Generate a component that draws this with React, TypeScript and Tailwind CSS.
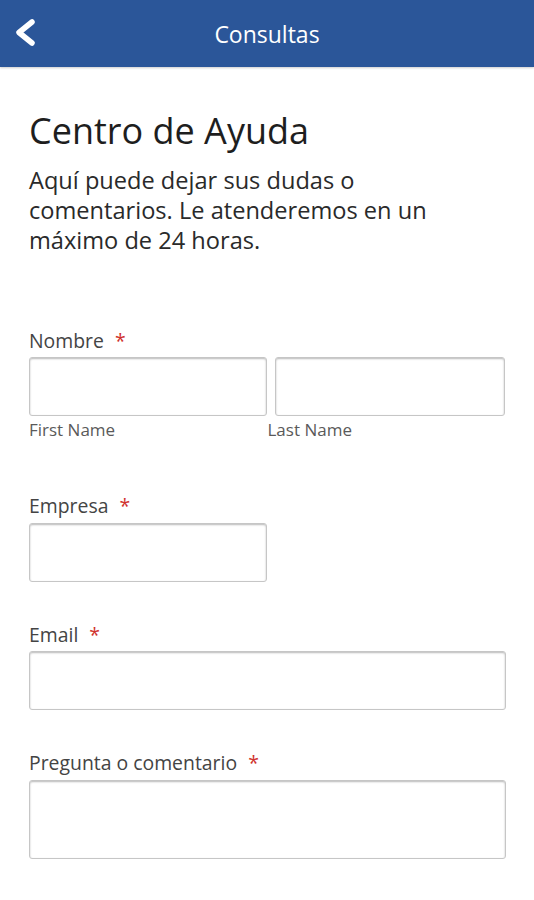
import React from "react";

const boxCls =
  "rounded-[3px] border border-[#c6c6c6] bg-white shadow-[inset_0_1px_2px_rgba(0,0,0,0.28)]";

function Label({ text }: { text: string }) {
  return (
    <div className="text-[19.4px] leading-[22px] text-[#444444]">
      {text} <span className="ml-[6px] text-[#d0312d]">*</span>
    </div>
  );
}

export default function App() {
  return (
    <div
      className="min-h-[900px] w-[534px] bg-white"
      style={{ fontFamily: '"Open Sans", "Noto Sans", sans-serif' }}
    >
      <header className="relative flex h-[67px] items-center justify-center bg-[#2b5699] shadow-[0_1px_2px_rgba(0,0,0,0.2)]">
        <svg
          className="absolute left-[14px] top-[17px]"
          width="24"
          height="32"
          viewBox="0 0 24 32"
        >
          <path
            d="M18 5 L5 15.5 L18 26"
            fill="none"
            stroke="white"
            strokeWidth="5.5"
            strokeLinecap="round"
            strokeLinejoin="round"
          />
        </svg>
        <span className="text-[23px] leading-[30px] text-white">Consultas</span>
      </header>

      <main className="px-[29px] pt-[42px]">
        <h1 className="text-[36px] leading-[44px] text-[#1e1e1e]">Centro de Ayuda</h1>
        <p className="mt-[12px] text-[23.6px] leading-[30px] text-[#2a2a2a]">
          Aquí puede dejar sus dudas o<br />
          comentarios. Le atenderemos en un<br />
          máximo de 24 horas.
        </p>

        <div className="mt-[75px]">
          <Label text="Nombre" />
          <div className="mt-[5px] flex gap-[8px]">
            <div className="w-[238px]">
              <div className={`h-[59px] ${boxCls}`} />
              <div className="mt-[4px] text-[17px] leading-[20px] text-[#5a5a5a]">First Name</div>
            </div>
            <div className="w-[231px]">
              <div className={`h-[59px] ${boxCls}`} />
              <div className="mt-[4px] -ml-[7px] text-[17px] leading-[20px] text-[#5a5a5a]">Last Name</div>
            </div>
          </div>
        </div>

        <div className="mt-[55px]">
          <Label text="Empresa" />
          <div className={`mt-[6px] h-[59px] w-[238px] ${boxCls}`} />
        </div>

        <div className="mt-[42px]">
          <Label text="Email" />
          <div className={`mt-[5px] h-[59px] w-[477px] ${boxCls}`} />
        </div>

        <div className="mt-[42px]">
          <Label text="Pregunta o comentario" />
          <div className={`mt-[6px] h-[79px] w-[477px] ${boxCls}`} />
        </div>
      </main>
    </div>
  );
}
